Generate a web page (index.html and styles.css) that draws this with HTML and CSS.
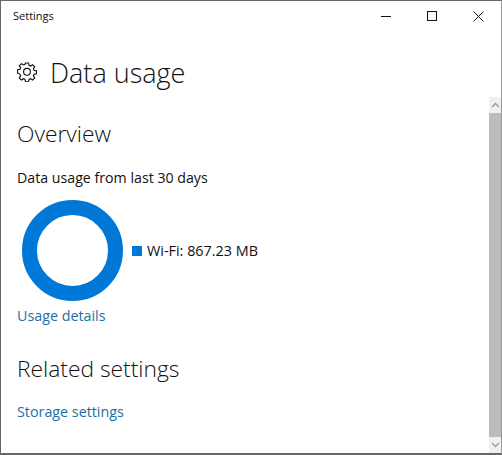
FILE: index.html
```html
<!DOCTYPE html>
<html lang="en">
<head>
    <meta charset="UTF-8">
    <title>Settings</title>
    <link rel="stylesheet" href="styles.css">
</head>
<body>
    <div class="window">
        <div class="titlebar">
            <span class="app-name">Settings</span>
            <div class="controls">
                <div class="control">
                    <svg width="10" height="10" viewBox="0 0 10 10"><path d="M0 5.5H10" stroke="#111" fill="none"/></svg>
                </div>
                <div class="control">
                    <svg width="10" height="10" viewBox="0 0 10 10"><rect x="0.5" y="0.5" width="9" height="9" stroke="#111" fill="none"/></svg>
                </div>
                <div class="control">
                    <svg width="11" height="11" viewBox="0 0 11 11"><path d="M0.5 0.5L10.5 10.5M10.5 0.5L0.5 10.5" stroke="#111" fill="none"/></svg>
                </div>
            </div>
        </div>
        <div class="body">
            <div class="content">
                <div class="page-header">
                    <svg class="gear" width="20" height="20" viewBox="0 0 20 20">
                        <path d="M8.4 1h3.2l.5 2.500 1.600.7 2.200-1.400 2.200 2.300-1.400 2.100.7 1.600 2.600.5v3.200l-2.600.5-.7 1.600 1.400 2.100-2.200 2.300-2.200-1.400-1.600.7-.5 2.500H8.400l-.5-2.500-1.600-.7-2.200 1.400-2.200-2.300 1.400-2.100-.7-1.600L0 11.400V8.200l2.600-.5.7-1.600-1.400-2.100 2.200-2.300 2.200 1.400 1.600-.7z" transform="translate(0.500 0) scale(0.950)" stroke="#111" stroke-width="1.200" fill="none"/>
                        <circle cx="10" cy="9.800" r="3.400" stroke="#111" stroke-width="1.100" fill="none"/>
                    </svg>
                    <h1>Data usage</h1>
                </div>
                <h2 class="overview">Overview</h2>
                <p class="caption">Data usage from last 30 days</p>
                <div class="usage">
                    <div class="donut"></div>
                    <span class="swatch"></span>
                    <span class="legend">Wi-Fi: 867.23 MB</span>
                </div>
                <a class="link" href="#">Usage details</a>
                <h2 class="related">Related settings</h2>
                <a class="link" href="#">Storage settings</a>
            </div>
            <div class="scrollbar">
                <svg width="9" height="6" viewBox="0 0 9 6"><path d="M1 5L4.500 1.500L8 5" stroke="#999" stroke-width="1.300" fill="none"/></svg>
                <div class="thumb"></div>
                <svg width="9" height="6" viewBox="0 0 9 6"><path d="M1 1L4.500 4.500L8 1" stroke="#999" stroke-width="1.300" fill="none"/></svg>
            </div>
        </div>
    </div>
</body>
</html>
```

FILE: styles.css
```css
* {
    box-sizing: border-box;
}

body {
    margin: 0;
    background-color: #fff;
    font-family: "Open Sans", "Noto Sans", sans-serif;
    color: #111;
}

.window {
    display: flex;
    flex-direction: column;
    width: 502px;
    height: 455px;
    border: 1px solid #666;
    border-bottom-width: 2px;
    border-right-color: #999;
    overflow: hidden;
    background-color: #fff;
}

.titlebar {
    display: flex;
    justify-content: space-between;
    align-items: center;
    height: 30px;
    flex-shrink: 0;
}

.app-name {
    padding: 0 0 2px 12px;
    font-size: 11px;
}

.controls {
    display: flex;
}

.control {
    display: flex;
    justify-content: center;
    align-items: center;
    width: 46px;
    height: 30px;
}

.body {
    display: flex;
    flex: 1;
    min-height: 0;
}

.content {
    flex: 1;
    padding: 0 0 0 16px;
}

.page-header {
    display: flex;
    align-items: center;
    height: 44px;
    margin-top: 19px;
}

.gear {
    margin-right: 13px;
}

h1 {
    margin: 0;
    font-size: 27px;
    font-weight: 300;
}

h2 {
    margin: 0;
    font-size: 22.8px;
    font-weight: 300;
    line-height: 28px;
}

.overview {
    margin-top: 26px;
}

.caption {
    margin: 20px 0 0;
    font-size: 14.2px;
    line-height: 20px;
}

.usage {
    display: flex;
    align-items: center;
    margin-top: 12px;
    padding-left: 5px;
}

.donut {
    width: 101px;
    height: 101px;
    margin-right: 9px;
    border: 15px solid #0078d7;
    border-radius: 50%;
}

.swatch {
    width: 10px;
    height: 10px;
    margin-right: 5px;
    background-color: #0078d7;
}

.legend {
    font-size: 14.4px;
}

.link {
    display: block;
    font-size: 14.3px;
    line-height: 20px;
    color: #1a6fa8;
    text-decoration: none;
}

.usage + .link {
    margin-top: 5px;
}

.related {
    margin: 29px 0 19px;
}

.scrollbar {
    display: flex;
    flex-direction: column;
    align-items: center;
    width: 12px;
    margin-top: 66px;
    background-color: #f0f0f0;
}

.scrollbar svg {
    flex-shrink: 0;
    margin: 5px 0;
}

.thumb {
    flex: 1;
    width: 100%;
    background-color: #bcbcbc;
}
```
